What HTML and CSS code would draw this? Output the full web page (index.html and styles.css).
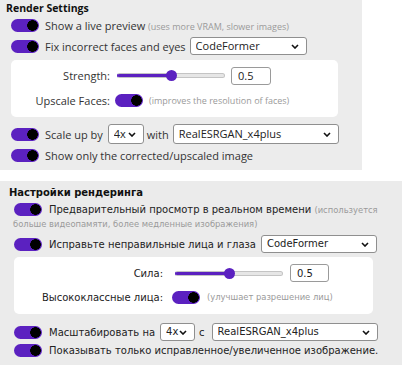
FILE: index.html
```html
<!DOCTYPE html>
<html>
	<head>
		<meta charset="UTF-8">
		<title>Render Settings</title>
		<link rel="stylesheet" href="styles.css">
	</head>
	<body>
		<!--英文版-->
		<div class="panel en">
			<h3 class="title">Render Settings</h3>
			<div class="row r1">
				<input type="checkbox" class="toggle" checked>
				<label>Show a live preview <small>(uses more VRAM, slower images)</small></label>
			</div>
			<div class="row r2">
				<input type="checkbox" class="toggle" checked>
				<label>Fix incorrect faces and eyes</label>
				<select class="sel sel-model"><option>CodeFormer</option></select>
			</div>
			<div class="box">
				<div class="field">
					<span class="lbl">Strength:</span>
					<input type="range" class="slider" min="0" max="1" step="0.01" value="0.5">
					<input type="text" class="num" value="0.5">
				</div>
				<div class="field">
					<span class="lbl">Upscale Faces:</span>
					<input type="checkbox" class="toggle" checked>
					<small class="hint">(improves the resolution of faces)</small>
				</div>
			</div>
			<div class="row r3">
				<input type="checkbox" class="toggle" checked>
				<label>Scale up by</label>
				<select class="sel sel-scale"><option>4x</option></select>
				<span class="with">with</span>
				<select class="sel sel-up"><option>RealESRGAN_x4plus</option></select>
			</div>
			<div class="row r4">
				<input type="checkbox" class="toggle" checked>
				<label>Show only the corrected/upscaled image</label>
			</div>
		</div>

		<!--俄文版-->
		<div class="panel ru">
			<h3 class="title">Настройки рендеринга</h3>
			<div class="wrap">
				<input type="checkbox" class="toggle" checked><label><span class="live">Предварительный просмотр в реальном времени</span> <small>(используется больше видеопамяти, более медленные изображения)</small></label>
			</div>
			<div class="row r2">
				<input type="checkbox" class="toggle" checked>
				<label>Исправьте неправильные лица и глаза</label>
				<select class="sel sel-model"><option>CodeFormer</option></select>
			</div>
			<div class="box">
				<div class="field">
					<span class="lbl">Сила:</span>
					<input type="range" class="slider" min="0" max="1" step="0.01" value="0.5">
					<input type="text" class="num" value="0.5">
				</div>
				<div class="field">
					<span class="lbl">Высококлассные лица:</span>
					<input type="checkbox" class="toggle" checked>
					<small class="hint">(улучшает разрешение лиц)</small>
				</div>
			</div>
			<div class="row r3">
				<input type="checkbox" class="toggle" checked>
				<label>Масштабировать на</label>
				<select class="sel sel-scale"><option>4x</option></select>
				<span class="with">с</span>
				<select class="sel sel-up"><option>RealESRGAN_x4plus</option></select>
			</div>
			<div class="row r4">
				<input type="checkbox" class="toggle" checked>
				<label>Показывать только исправленное/увеличенное изображение.</label>
			</div>
		</div>
	</body>
</html>
```

FILE: styles.css
```css
*{
	margin: 0;
	padding: 0;
	box-sizing: border-box;
}
body{
	background-color: #fff;
}
.panel{
	background-color: #ececec;
}
.title{
	font-weight: bold;
	color: #111;
}
.row{
	display: flex;
	align-items: center;
	white-space: nowrap;
}
small{
	color: #9a9a9a;
}
/*开关*/
.toggle{
	appearance: none;
	-webkit-appearance: none;
	flex: none;
	width: 28px;
	height: 13px;
	border-radius: 7px;
	background: radial-gradient(circle 5.5px at 21.5px 6.5px, #000 92%, transparent 100%), #5b21c0;
	border: none;
	outline: none;
}
/*下拉框*/
.sel{
	appearance: none;
	-webkit-appearance: none;
	flex: none;
	font: inherit;
	line-height: 14px;
	color: #222;
	background: #fff url("data:image/svg+xml,%3Csvg xmlns='http://www.w3.org/2000/svg' width='8' height='5' viewBox='0 0 8 5'%3E%3Cpath d='M1 1l3 3 3-3' fill='none' stroke='%23111' stroke-width='1.6'/%3E%3C/svg%3E") no-repeat right 7px center;
	border: 1px solid #8f8f8f;
	border-radius: 3px;
	padding: 0 0 0 5px;
}
/*滑块*/
.slider{
	appearance: none;
	-webkit-appearance: none;
	flex: none;
	width: 108px;
	height: 5px;
	border-radius: 3px;
	background: linear-gradient(to right, #5b21c0 50%, #e6e6e6 50%);
	border: 1px solid #c4c4c4;
	border-left-color: #5b21c0;
	outline: none;
}
.slider::-webkit-slider-thumb{
	-webkit-appearance: none;
	width: 11px;
	height: 11px;
	border-radius: 50%;
	background-color: #5b21c0;
}
.num{
	flex: none;
	font: inherit;
	color: #222;
	height: 18px;
	border: 1px solid #9a9a9a;
	border-radius: 3px;
	padding-left: 6px;
	background-color: #fff;
}
.box{
	background-color: #fff;
	border-radius: 5px;
}
.field{
	display: flex;
	align-items: center;
	white-space: nowrap;
}
.lbl{
	flex: none;
	text-align: right;
}

/*英文版*/
.en{
	width: 362px;
	height: 170px;
	font-family: "Open Sans", sans-serif;
	font-size: 11px;
	color: #333;
}
.en .title{
	font-size: 10.5px;
	line-height: 17px;
	padding-left: 6px;
}
.en .row{
	padding-left: 11px;
}
.en .row label{
	margin-left: 6px;
}
.en small{
	font-size: 9px;
}
.en .r1{
	height: 16px;
}
.en .r2{
	height: 22px;
	margin-top: 2px;
}
.en .r2 .sel{
	margin-left: 4px;
	width: 117px;
	height: 18px;
}
.en .box{
	margin: 3px 0 0 11px;
	width: 327px;
	height: 57px;
	padding-top: 3px;
}
.en .field{
	height: 25px;
}
.en .lbl{
	width: 99px;
	margin-right: 5px;
}
.en .slider{
	margin-left: 2px;
}
.en .num{
	margin-left: 6px;
	width: 40px;
}
.en .hint{
	margin-left: 6px;
}
.en .r3{
	height: 20px;
	margin-top: 7px;
}
.en .r3 .sel{
	height: 20px;
}
.en .sel-scale{
	margin-left: 5px;
	width: 36px;
}
.en .with{
	margin-left: 3px;
}
.en .sel-up{
	margin-left: 4px;
	width: 166px;
}
.en .r4{
	height: 16px;
	margin-top: 3px;
}

/*俄文版*/
.ru{
	width: 402px;
	height: 184px;
	margin-top: 11px;
	background-color: #ebebeb;
	font-family: "DejaVu Sans", Verdana, sans-serif;
	font-size: 10px;
	color: #222;
}
.ru .title{
	font-size: 10px;
	line-height: 16px;
	padding: 4px 0 0 9px;
}
.ru small{
	font-size: 8.4px;
}
.ru .wrap{
	margin-top: 2px;
	padding: 0 12px 0 13px;
	line-height: 13px;
}
.ru .wrap .toggle{
	vertical-align: top;
	margin: 0 7px 0 1px;
}
.ru .row{
	padding-left: 14px;
}
.ru .row label{
	margin-left: 7px;
}
.ru .r2{
	height: 22px;
	margin-top: 2px;
}
.ru .r2 .sel{
	margin-left: 5px;
	width: 116px;
	height: 18px;
}
.ru .box{
	margin: 2px 0 0 14px;
	width: 359px;
	height: 57px;
	padding-top: 4px;
}
.ru .field{
	height: 24px;
}
.ru .lbl{
	width: 149px;
}
.ru .slider{
	margin-left: 12px;
}
.ru .num{
	margin-left: 7px;
	width: 39px;
}
.ru .field .toggle{
	margin-left: 9px;
}
.ru .hint{
	margin-left: 7px;
}
.ru .r3{
	height: 18px;
	margin-top: 9px;
}
.ru .r3 .sel{
	height: 18px;
}
.ru .sel-scale{
	margin-left: 5px;
	width: 35px;
}
.ru .with{
	margin-left: 4px;
}
.ru .sel-up{
	margin-left: 7px;
	width: 166px;
}
.ru .r4{
	height: 14px;
	margin-top: 2px;
}
```
